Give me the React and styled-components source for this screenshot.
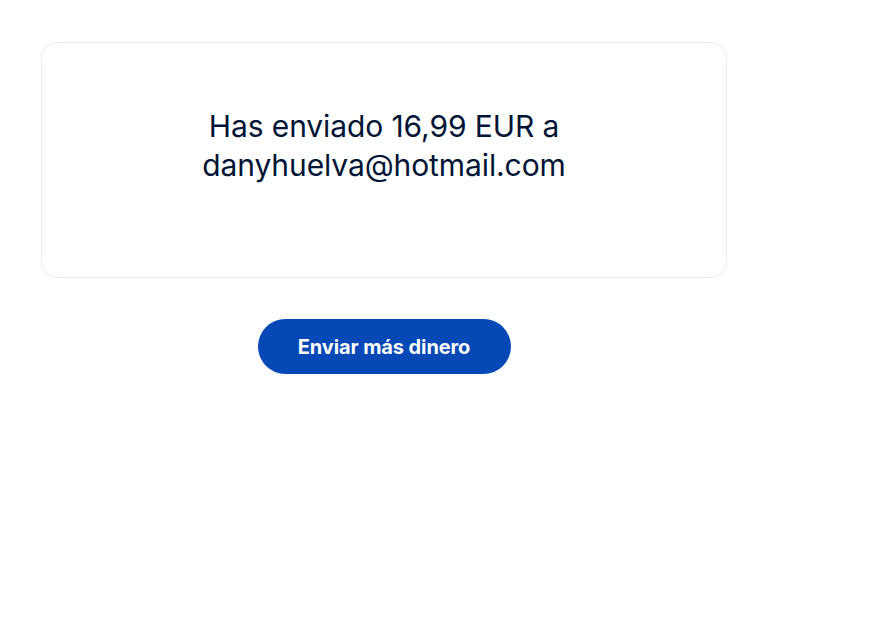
import React from 'react'
import styled, { createGlobalStyle } from 'styled-components'

const Global = createGlobalStyle`
    html, body {
        margin: 0;
        padding: 0;
        background: #ffffff;
    }
    body {
        font-family: "Inter", "Liberation Sans", sans-serif;
    }
`

const Page = styled.div`
    width: 686px;
    padding: 42px 0 0 41px;
    display: flex;
    flex-direction: column;
    align-items: center;
`

const Card = styled.div`
    box-sizing: border-box;
    width: 100%;
    height: 236px;
    border: 1px solid #ececec;
    border-radius: 16px;
    display: flex;
    align-items: center;
    justify-content: center;
    padding-bottom: 28px;
`

const Message = styled.p`
    margin: 0;
    width: 400px;
    text-align: center;
    font-size: 30px;
    line-height: 39px;
    color: #001435;
    letter-spacing: -0.1px;
`

const Button = styled.button`
    margin-top: 41px;
    width: 253px;
    height: 55px;
    border: 0;
    border-radius: 28px;
    background: #0548b6;
    color: #ffffff;
    font-family: "Inter", "Liberation Sans", sans-serif;
    font-weight: 700;
    font-size: 20px;
    letter-spacing: -0.1px;
    cursor: pointer;
`

export default function App() {
    return (
        <>
            <Global />
            <Page>
                <Card>
                    <Message>Has enviado 16,99 EUR a danyhuelva@hotmail.com</Message>
                </Card>
                <Button>Enviar más dinero</Button>
            </Page>
        </>
    )
}
